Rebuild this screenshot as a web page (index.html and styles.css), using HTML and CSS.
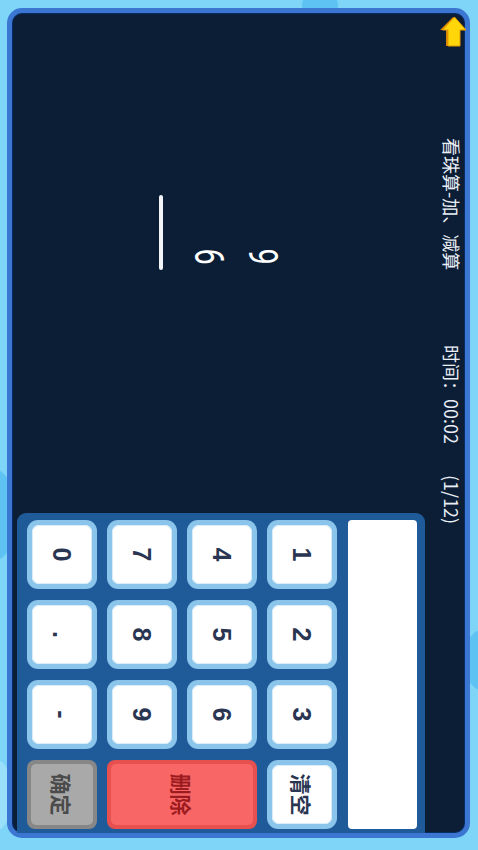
FILE: index.html
```html
<!DOCTYPE html>
<html lang="zh-CN">
<head>
<meta charset="utf-8">
<title>看珠算-加、减算</title>
<link rel="stylesheet" href="styles.css">
</head>
<body>
<div class="screen">
  <div class="stage">
    <span class="bubble bubble-a"></span>
    <span class="bubble bubble-b"></span>
    <span class="bubble bubble-c"></span>
    <span class="bubble bubble-d"></span>
    <div class="frame">
      <section class="board">
        <header class="topbar">
          <div class="back-cell">
            <svg class="back" viewBox="0 0 32 28" width="32" height="28" aria-label="返回">
              <path d="M1 14 L14 2 L14 8 L30 8 L30 21 L14 21 L14 27 Z" fill="#d98700"/>
              <path d="M1 12.5 L14 1 L14 7 L30 7 L30 19 L14 19 L14 24.5 Z" fill="#ffd60a" stroke="#e69a00" stroke-width="1" stroke-linejoin="round"/>
            </svg>
          </div>
          <div class="title">看珠算-加、减算</div>
          <div class="time">时间：00:02</div>
          <div class="count">(1/12)</div>
        </header>
        <div class="problem">
          <div class="num">9</div>
          <div class="num">6</div>
          <div class="rule"></div>
        </div>
      </section>
      <section class="pad">
        <div class="display"></div>
        <div class="keys">
          <button class="key"><span>1</span></button>
          <button class="key"><span>2</span></button>
          <button class="key"><span>3</span></button>
          <button class="key action"><span>清空</span></button>
          <button class="key"><span>4</span></button>
          <button class="key"><span>5</span></button>
          <button class="key"><span>6</span></button>
          <button class="key delete"><span>删除</span></button>
          <button class="key"><span>7</span></button>
          <button class="key"><span>8</span></button>
          <button class="key"><span>9</span></button>
          <button class="key"><span>0</span></button>
          <button class="key"><span>.</span></button>
          <button class="key"><span>-</span></button>
          <button class="key confirm"><span>确定</span></button>
        </div>
      </section>
    </div>
  </div>
</div>
</body>
</html>
```
FILE: styles.css
```css
html, body {
  margin: 0;
  padding: 0;
  background: #7fd5f7;
}

.screen {
  width: 478px;
  height: 850px;
  overflow: hidden;
  background: #7fd5f7;
}

.stage {
  position: relative;
  width: 850px;
  height: 478px;
  transform-origin: 0 0;
  transform: translateX(478px) rotate(90deg);
  display: flex;
  font-family: "Noto Sans CJK SC", "Noto Sans", sans-serif;
}

.bubble {
  position: absolute;
  border-radius: 50%;
  background: #5ec3f3;
}
.bubble-a { left: -12px; top: 140px; width: 36px; height: 36px; }
.bubble-b { left: 470px; top: 462px; width: 90px; height: 40px; }
.bubble-c { left: 630px; top: -22px; width: 60px; height: 36px; }
.bubble-d { left: 760px; top: 466px; width: 70px; height: 30px; background: #9be0fa; }

.frame {
  position: relative;
  margin: 8px 12px 7px 8px;
  flex: 1;
  min-width: 0;
  display: flex;
  background: #0c1e35;
  border: 5px solid #3c76d3;
  border-radius: 15px;
  box-shadow: inset 0 0 0 1px #0a2a63;
}

.board {
  flex: 1;
  min-width: 0;
  display: flex;
  flex-direction: column;
}

.topbar {
  display: grid;
  grid-template-columns: 125px 207px 130px minmax(0, 1fr);
  align-items: center;
  height: 26px;
  color: #e9eef5;
  font-size: 18px;
  line-height: 26px;
  white-space: nowrap;
}

.back-cell {
  display: flex;
  align-items: center;
  padding-left: 3px;
  margin-top: -2px;
}
.back { display: block; }

.problem {
  margin: 150px 0 0 182px;
  width: 75px;
  display: flex;
  flex-direction: column;
  align-items: flex-end;
}

.num {
  height: 54px;
  line-height: 54px;
  padding-right: 8px;
  color: #ffffff;
  font-family: Roboto, "Open Sans", sans-serif;
  font-size: 40px;
  font-weight: 400;
  transform: scaleX(0.72);
  transform-origin: 100% 50%;
}

.rule {
  margin-top: 18px;
  width: 75px;
  height: 4px;
  border-radius: 2px;
  background: #f2f4f7;
}

.pad {
  flex: none;
  width: 320px;
  height: 408px;
  box-sizing: border-box;
  margin-top: 40px;
  align-self: flex-start;
  padding: 8px 4px 10px 7px;
  background: #1f5b98;
  border-radius: 9px 0 0 9px;
  display: flex;
  flex-direction: column;
  gap: 11px;
}

.display {
  height: 69px;
  background: #ffffff;
  border-radius: 4px;
}

.keys {
  display: grid;
  grid-template-columns: repeat(4, 69px);
  grid-template-rows: repeat(4, 70px);
  column-gap: 11px;
  row-gap: 10px;
}

.key {
  margin: 0;
  padding: 5px;
  border: 0;
  border-radius: 11px;
  background: #8cc5ec;
  display: flex;
  font-family: "Liberation Sans", "Noto Sans CJK SC", sans-serif;
}

.key span {
  flex: 1;
  display: flex;
  align-items: center;
  justify-content: center;
  background: #ffffff;
  border-radius: 7px;
  box-shadow: inset 0 0 0 1px #d9ecf8;
  color: #2a3551;
  font-size: 25px;
  font-weight: 700;
}

.key.action span,
.key.delete span,
.key.confirm span {
  font-family: "Noto Sans CJK SC", sans-serif;
  font-size: 21px;
  font-weight: 700;
}

.key.action { grid-column: 4; grid-row: 1; }

.key.delete {
  grid-column: 4;
  grid-row: 2 / span 2;
  background: #e6504f;
  padding: 4px;
  border-radius: 8px;
}
.key.delete span {
  background: #f86666;
  box-shadow: none;
  border-radius: 5px;
  color: #9c1b1e;
}

.key.confirm {
  grid-column: 4;
  grid-row: 4;
  background: #878787;
  padding: 4px;
  border-radius: 8px;
}
.key.confirm span {
  background: #a9a9a9;
  box-shadow: none;
  border-radius: 5px;
  color: #4b4b4b;
}
```
